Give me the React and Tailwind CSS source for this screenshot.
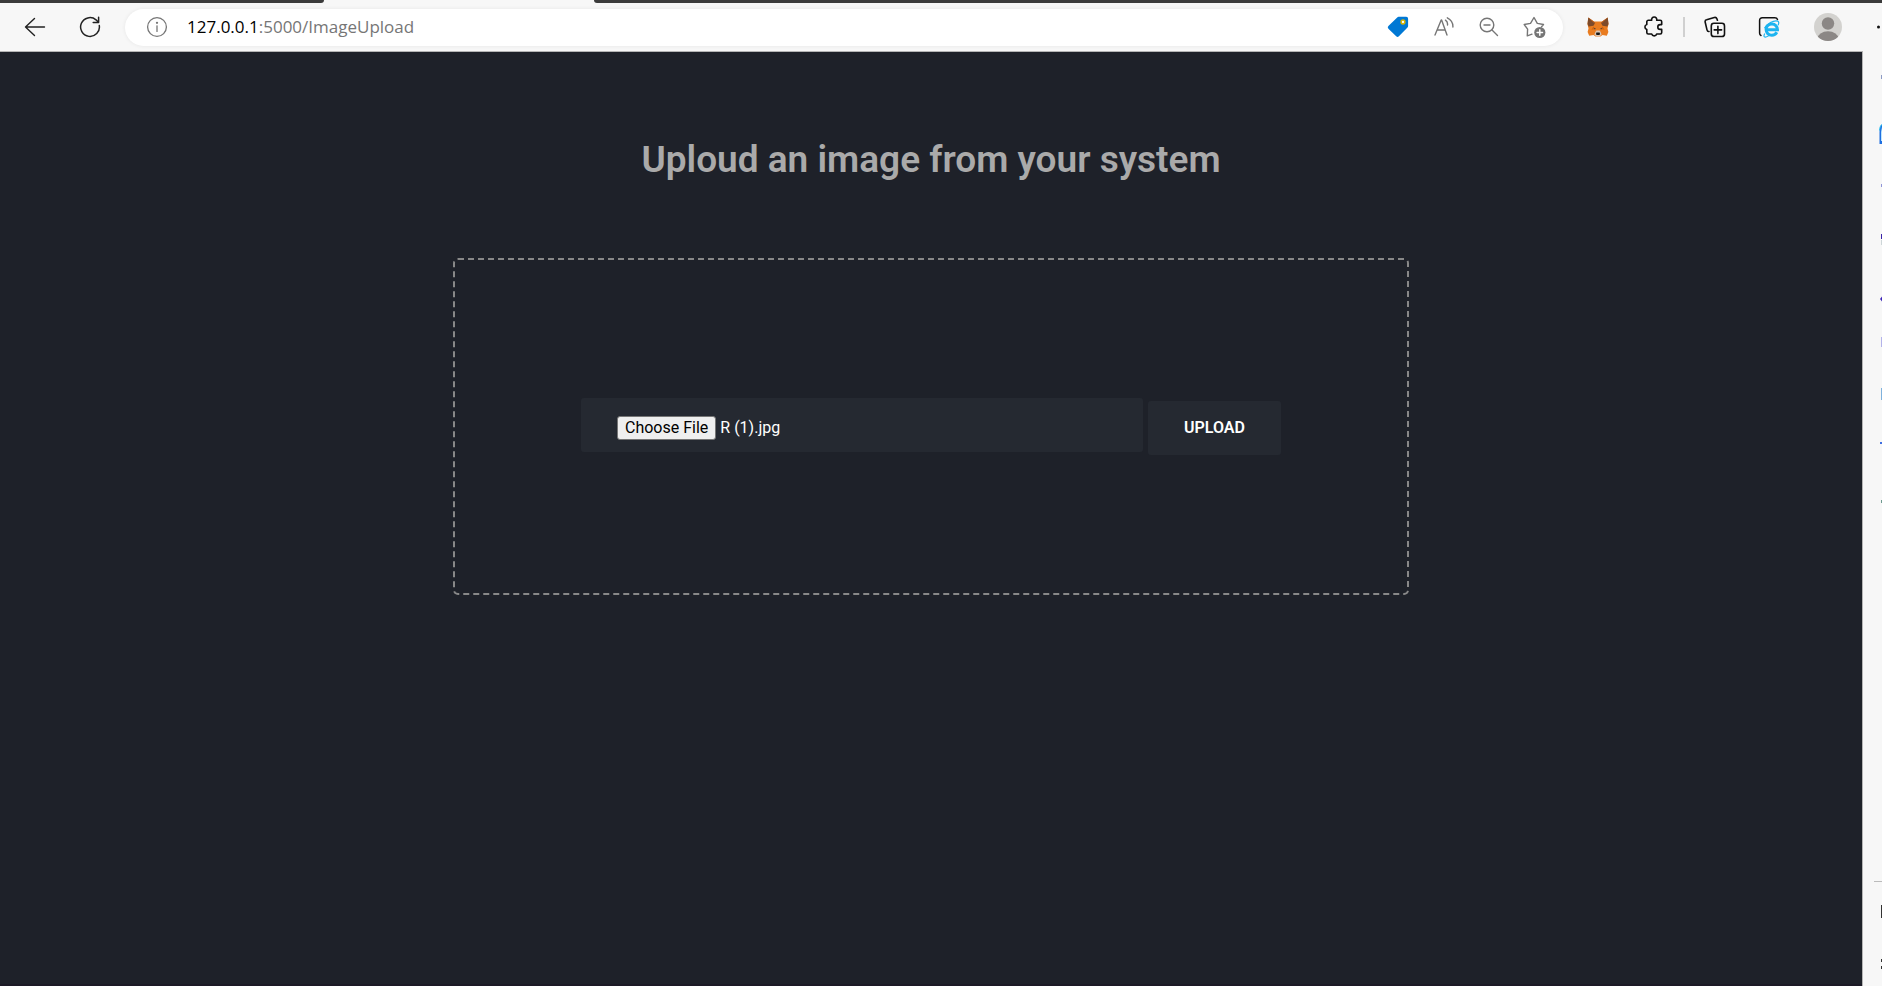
import React from 'react';
import { clsx } from 'clsx';

function IconButton({ label, className, children }) {
  return (
    <button type="button" aria-label={label} className={clsx('flex h-8 shrink-0 items-center justify-center', className)}>
      {children}
    </button>
  );
}

const line = {
  fill: 'none',
  stroke: 'currentColor',
  strokeWidth: 1.4,
  strokeLinecap: 'round',
  strokeLinejoin: 'round',
};

function BackIcon() {
  return (
    <svg width="22" height="22" viewBox="0 0 22 22" {...line}>
      <path d="M20.5 11H1.5M10.5 2.5L1.5 11l9 8.5" />
    </svg>
  );
}

function RefreshIcon() {
  return (
    <svg width="22" height="22" viewBox="0 0 22 22" {...line} strokeWidth="1.5">
      <path d="M20.3 9.6A9.4 9.4 0 1 1 17 3.8l2.3 2.3" />
      <path d="M19.6 1.2v5.2h-5.4" />
    </svg>
  );
}

function InfoIcon() {
  return (
    <svg width="22" height="22" viewBox="0 0 22 22" {...line} strokeWidth="1.3">
      <circle cx="11" cy="11" r="9.4" />
      <path d="M11 9.8v5.6" />
      <circle cx="11" cy="6.8" r="0.5" fill="currentColor" />
    </svg>
  );
}

function TagIcon() {
  return (
    <svg width="22" height="22" viewBox="0 0 22 22">
      <path d="M11.6.8h7.6a1.9 1.9 0 0 1 1.9 1.9v7.4c0 .6-.2 1.1-.6 1.5l-8.6 8.7a1.9 1.9 0 0 1-2.7 0L1.4 12.7a1.9 1.9 0 0 1 0-2.7L10.2 1.4c.4-.4.9-.6 1.4-.6z" fill="#0078d4" />
      <circle cx="16" cy="6" r="1.9" fill="#fff" stroke="#d8b400" strokeWidth="1.5" />
    </svg>
  );
}

function ReadAloudIcon() {
  return (
    <svg width="20" height="20" viewBox="0 0 20 20" {...line}>
      <path d="M1 18L7.2 3h.4L13 18M3.2 13h8" />
      <path d="M11.5 3.2c1.5 1 2.3 2.7 2 4.8M13.300.8c3.7 1.9 5.8 5 5.6 9.2" />
    </svg>
  );
}

function ZoomOutIcon() {
  return (
    <svg width="20" height="20" viewBox="0 0 20 20" {...line}>
      <circle cx="8" cy="8" r="6.8" />
      <path d="M5 8h6M13 13l5.500 5.500" />
    </svg>
  );
}

function FavouriteIcon() {
  return (
    <svg width="24" height="24" viewBox="0 0 24 24" {...line}>
      <path d="M9 19.2l-4.700 1.700.3-6.700L1.200 9.500l6.300-1.100L11 2.500l3.300 5.900 6.200 1.100-2 2.400" />
      <circle cx="16.800" cy="17.500" r="5.600" fill="currentColor" stroke="none" />
      <path d="M16.800 14.800v5.400M14.100 17.500h5.400" stroke="#fff" strokeWidth="1.500" />
    </svg>
  );
}

function FoxIcon() {
  return (
    <svg width="22" height="20" viewBox="0 0 22 20">
      <path d="M1.300.6L6.800 4.600h8.400L20.700.6l.8 6.400-1 4.400.9 3.600-1.600 3.700-4.300-.8-2 1.600H8.500l-2-1.600-4.300.8L.6 15l.9-3.600-1-4.400z" fill="#e97c20" />
      <path d="M1.300.6l6.900 5.200-1.700 3L1.600 9.500.5 7zM20.700.6l-6.900 5.200 1.700 3 4.900.7L21.500 7z" fill="#7d4a2a" />
      <path d="M1.300.6l5.500 4 1.800 2.600zM20.700.6l-5.500 4-1.800 2.600z" fill="#d56a1c" />
      <path d="M6.300 9.500l2.200 2.500-4 .7zM15.700 9.500L13.500 12l4 .7z" fill="#d0640f" />
      <path d="M8.400 15l1-1.500h3.200l1 1.500 1 2.500-1.700 1.800H9.100l-1.700-1.800z" fill="#d9c4b4" />
      <path d="M6.800 10.800l2 .9-.9.8zM15.200 10.800l-2 .9.9.8z" fill="#233447" />
      <path d="M9.400 15.400h3.200l.5 1.900-1 .6H9.900l-1-.6z" fill="#161616" />
    </svg>
  );
}

function PuzzleIcon() {
  return (
    <svg width="20" height="22" viewBox="0 0 20 22" {...line} strokeWidth="1.6">
      <path d="M4.300 4.300h3.400a2.600 2.600 0 1 1 5 0h3.500a1.500 1.500 0 0 1 1.500 1.500v2.800h-1.500a2.400 2.400 0 0 0 0 4.800h1.500v3.100a1.500 1.500 0 0 1-1.500 1.500h-3.500a2.600 2.600 0 0 1-5 0H4.300a1.500 1.500 0 0 1-1.500-1.500v-3a2.600 2.600 0 0 1 0-5V5.800a1.500 1.500 0 0 1 1.500-1.500z" />
    </svg>
  );
}

function CollectionsIcon() {
  return (
    <svg width="22" height="22" viewBox="0 0 22 22" {...line} strokeWidth="1.6">
      <path d="M5 15.500c-1.200.2-1.700-.4-2-1.600L1.200 6.300c-.3-1.200.2-2.200 1.400-2.500l7.700-2.300c1.200-.3 2.200.2 2.600 1.300l.5 1.500" />
      <rect x="7.300" y="7.300" width="13.200" height="13.200" rx="2.600" />
      <path d="M13.900 10.200v7.400M10.200 13.900h7.400" />
    </svg>
  );
}

function ExplorerIcon() {
  return (
    <svg width="22" height="22" viewBox="0 0 22 22" fill="none">
      <path d="M3 19.500c-.9-.4-1.400-1-1.400-2.200V4.500c0-1.700 1-2.700 2.700-2.700h12.500c1.500 0 2.300.5 2.700 1.700" stroke="#111" strokeWidth="1.5" strokeLinecap="round" />
      <path d="M18.800 16.300c-1 1.900-2.800 3-5 3a5.700 5.700 0 1 1 5.700-5.500H8.900" stroke="#1db4f0" strokeWidth="3" />
      <path d="M6.800 17.500c-1.500 2.600-.9 4 1.200 3.500 1.200-.3 2.300-.9 3.200-1.600M6.500 12.200c2.500-4.500 9-8.200 13.200-7.100 1.300.4 1.300 2.300.4 4.200" stroke="#1db4f0" strokeWidth="1.2" />
    </svg>
  );
}

function AvatarIcon() {
  return (
    <svg width="28" height="28" viewBox="0 0 28 28">
      <defs>
        <clipPath id="avatar-disc">
          <circle cx="14" cy="14" r="14" />
        </clipPath>
      </defs>
      <g clipPath="url(#avatar-disc)">
        <rect width="28" height="28" fill="#d3d2cf" />
        <circle cx="14" cy="10.500" r="6.200" fill="#8b8785" />
        <ellipse cx="14" cy="25.500" rx="10.500" ry="7.200" fill="#8b8785" />
      </g>
    </svg>
  );
}

function MoreIcon() {
  return (
    <svg width="5" height="20" viewBox="0 0 5 20" fill="#111">
      <circle cx="1.500" cy="10" r="1.500" />
      <circle cx="7.500" cy="10" r="1.500" />
      <circle cx="13.500" cy="10" r="1.500" />
    </svg>
  );
}

const sidebarTop = [
  { label: 'Search', art: <rect x="19" y="24" width="1" height="4" fill="#8d9bc4" /> },
  {
    label: 'Discover',
    art: (
      <>
        <path d="M20 21.500c-2 1-2.500 4-2.500 8v11.500H20z" fill="#1f6fe0" />
        <path d="M20 24v14h-1v-9z" fill="#bfe6fb" />
        <path d="M20 21.500c-1.500 1-2.300 3-2.400 6" stroke="#1cc0f0" fill="none" />
      </>
    ),
  },
  { label: 'Shopping', art: <rect x="19" y="29" width="1" height="3" fill="#9095d8" /> },
  {
    label: 'Tools',
    art: (
      <>
        <rect x="19" y="27" width="1" height="5" fill="#3a22a8" />
        <rect x="19" y="33" width="1" height="5" fill="#cdd6d8" />
      </>
    ),
  },
  { label: 'Games', art: <path d="M20 37.500l-2 2.500 2 2.500z" fill="#3a22b8" /> },
  { label: 'Office', art: <rect x="19" y="26" width="1" height="10" fill="#b3b3ea" /> },
  { label: 'Outlook', art: <rect x="19" y="25" width="1" height="12" fill="#7fb2dd" /> },
  { label: 'Drop', art: <rect x="18" y="27" width="2" height="2" fill="#3f6fe0" /> },
  { label: 'Image creator', art: <rect x="19" y="33" width="1" height="3" fill="#6e9a90" /> },
];

const sidebarBottom = [
  { label: 'Hide sidebar', art: <rect x="19" y="23" width="1" height="13" fill="#333" /> },
  { label: 'Settings', art: <path d="M19 25h1v3h-1zM19 32h1v3h-1z" fill="#333" /> },
];

function SidebarButton({ label, art }) {
  return (
    <button type="button" aria-label={label} className="block h-[52px] w-full">
      <svg width="20" height="52" viewBox="0 0 20 52" className="-ml-px">
        {art}
      </svg>
    </button>
  );
}

function BrowserBar() {
  return (
    <header className="bg-[#f7f7f7]">
      <div className="flex h-[3px]">
        <div className="w-[324px] rounded-br bg-[#3b3b3b]" />
        <div className="w-[270px]" />
        <div className="flex-1 rounded-bl bg-[#3b3b3b]" />
      </div>
      <div className="flex h-12 items-center">
        <nav aria-label="Navigation" className="flex w-[125px] shrink-0 items-center pl-2 text-[#222]">
          <IconButton label="Back" className="w-[54px]"><BackIcon /></IconButton>
          <IconButton label="Refresh" className="w-14"><RefreshIcon /></IconButton>
        </nav>
        <div className="flex h-[37px] min-w-0 flex-1 items-center rounded-full bg-white pl-4 pr-1 text-[#767676] shadow-[0_0_4px_rgba(0,0,0,0.07)]">
          <IconButton label="View site information" className="w-8"><InfoIcon /></IconButton>
          <a href="#address" className="ml-3.5 flex-1 truncate font-['Open_Sans',sans-serif] text-[17px] leading-6">
            <span className="text-black">127.0.0.1</span>:5000/ImageUpload
          </a>
          <IconButton label="Shopping" className="w-[46px]"><TagIcon /></IconButton>
          <IconButton label="Read aloud" className="w-[46px]"><ReadAloudIcon /></IconButton>
          <IconButton label="Zoom out" className="w-11"><ZoomOutIcon /></IconButton>
          <IconButton label="Add to favourites" className="w-12"><FavouriteIcon /></IconButton>
        </div>
        <div className="flex shrink-0 items-center pl-[7px] text-[#111]">
          <IconButton label="Wallet" className="w-14"><FoxIcon /></IconButton>
          <IconButton label="Extensions" className="w-14"><PuzzleIcon /></IconButton>
          <div className="mx-px h-5 w-0.5 bg-[#d0d0d0]" />
          <IconButton label="Collections" className="w-[58px]"><CollectionsIcon /></IconButton>
          <IconButton label="Internet Explorer mode" className="w-[50px]"><ExplorerIcon /></IconButton>
          <IconButton label="Profile" className="w-[68px]"><AvatarIcon /></IconButton>
          <button type="button" aria-label="Settings and more" className="flex h-8 w-5 items-center justify-end"><MoreIcon /></button>
        </div>
      </div>
    </header>
  );
}

function UploadForm() {
  return (
    <form
      onSubmit={(event) => event.preventDefault()}
      className="flex w-full max-w-[956px] justify-center gap-[5px] rounded-[5px] border-2 border-dashed border-[#888] px-[126px] pt-[138px] pb-[141px] text-base leading-5 text-white"
    >
      <div className="flex h-[54px] min-w-0 flex-1 items-center gap-1 rounded-[3px] bg-[#252931] px-9 pt-1.5">
        <input id="file" type="file" className="sr-only" />
        <label htmlFor="file" className="flex h-6 items-center rounded-[3px] border border-[#767676] bg-[#efefef] px-[7px] text-black">
          Choose File
        </label>
        <span>R (1).jpg</span>
      </div>
      <button type="submit" className="mt-[3px] -mb-[3px] h-[54px] w-[133px] rounded-[3px] bg-[#252931] font-semibold">
        UPLOAD
      </button>
    </form>
  );
}

export default function App() {
  return (
    <div className="flex min-h-screen flex-col bg-[#f7f7f7]">
      <BrowserBar />
      <div className="flex flex-1">
        <main className="flex flex-1 flex-col items-center border-t border-b-2 border-t-[#b5b5b5] border-b-[#1c1a26] bg-[#1e2129] pt-[84px] font-['Roboto',sans-serif]">
          <h1 className="text-[37px] leading-12 font-semibold text-[#aaaaaa]">Uploud an image from your system</h1>
          <div className="mt-[74px] flex w-full justify-center">
            <UploadForm />
          </div>
        </main>
        <aside aria-label="Sidebar" className="flex w-5 shrink-0 flex-col border-l border-[#b5b5b5]">
          {sidebarTop.map((item) => <SidebarButton key={item.label} {...item} />)}
          <div className="mt-auto ml-[11px] h-px bg-[#bbb]" />
          {sidebarBottom.map((item) => <SidebarButton key={item.label} {...item} />)}
        </aside>
      </div>
    </div>
  );
}
